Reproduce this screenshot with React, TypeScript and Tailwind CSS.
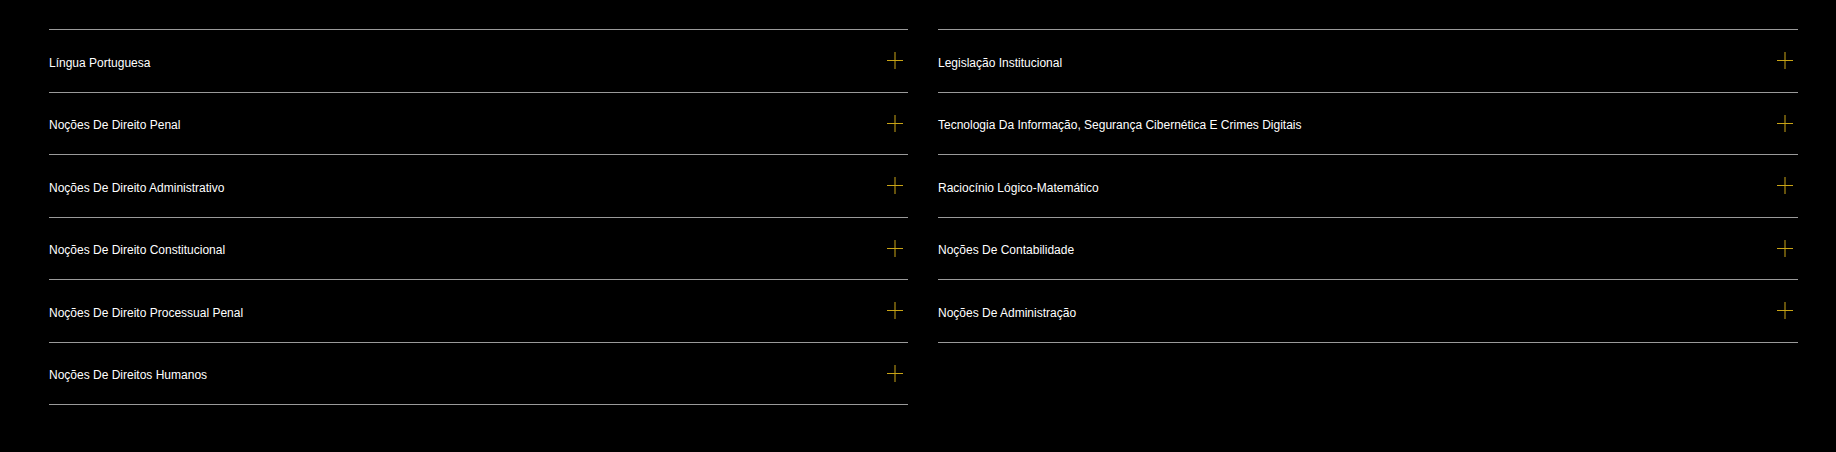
import React from "react";

type Column = string[];

const COLUMNS: Column[] = [
  [
    "Língua Portuguesa",
    "Noções De Direito Penal",
    "Noções De Direito Administrativo",
    "Noções De Direito Constitucional",
    "Noções De Direito Processual Penal",
    "Noções De Direitos Humanos",
  ],
  [
    "Legislação Institucional",
    "Tecnologia Da Informação, Segurança Cibernética E Crimes Digitais",
    "Raciocínio Lógico-Matemático",
    "Noções De Contabilidade",
    "Noções De Administração",
  ],
];

function PlusIcon() {
  return (
    <svg width="16" height="17" viewBox="0 0 16 17" className="shrink-0">
      <line x1="0" y1="8.5" x2="16" y2="8.5" stroke="#c9a416" strokeWidth="1" />
      <line x1="8" y1="0" x2="8" y2="17" stroke="#c9a416" strokeWidth="1" />
    </svg>
  );
}

function SubjectRow({ title }: { title: string }) {
  return (
    <button
      type="button"
      className="flex h-[62.5px] w-full items-center justify-between border-b border-[#9a9a9a] pr-[5px] text-left"
    >
      <span className="pt-[4px] text-[12px] leading-[14px] text-white">{title}</span>
      <PlusIcon />
    </button>
  );
}

export default function App() {
  return (
    <div
      className="min-h-screen bg-black pl-[49px] pt-[29px]"
      style={{ fontFamily: '"Liberation Sans", Arial, sans-serif' }}
    >
      <div className="grid grid-cols-[859px_860px] items-start gap-x-[30px]">
        {COLUMNS.map((col, i) => (
          <div key={i} className="flex flex-col border-t border-[#9a9a9a]">
            {col.map((title) => (
              <SubjectRow key={title} title={title} />
            ))}
          </div>
        ))}
      </div>
    </div>
  );
}
